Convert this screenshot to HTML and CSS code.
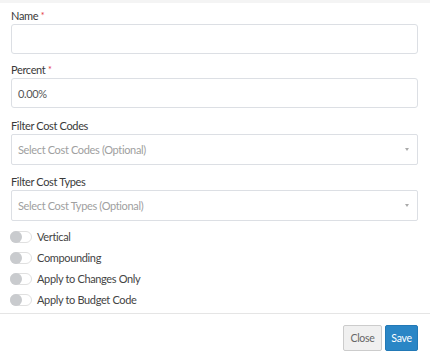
FILE: index.html
```html
<!DOCTYPE html>
<html>
<head>
<meta charset="utf-8">
<link rel="stylesheet" href="styles.css">
</head>
<body>
<div class="topbar"></div>
<div class="modal-body">
  <div class="field field-name">
    <label class="label">Name <span class="req">*</span></label>
    <div class="input"></div>
  </div>
  <div class="field field-percent">
    <label class="label">Percent <span class="req">*</span></label>
    <div class="input"><span class="value">0.00%</span></div>
  </div>
  <div class="field field-codes">
    <label class="label">Filter Cost Codes</label>
    <div class="input select"><span class="placeholder">Select Cost Codes (Optional)</span><span class="caret"></span></div>
  </div>
  <div class="field field-types">
    <label class="label">Filter Cost Types</label>
    <div class="input select"><span class="placeholder">Select Cost Types (Optional)</span><span class="caret"></span></div>
  </div>
  <div class="toggles">
    <div class="toggle-row"><span class="switch"><span class="knob"></span></span><span class="toggle-label">Vertical</span></div>
    <div class="toggle-row"><span class="switch"><span class="knob"></span></span><span class="toggle-label">Compounding</span></div>
    <div class="toggle-row"><span class="switch"><span class="knob"></span></span><span class="toggle-label">Apply to Changes Only</span></div>
    <div class="toggle-row"><span class="switch"><span class="knob"></span></span><span class="toggle-label">Apply to Budget Code</span></div>
  </div>
</div>
<div class="footer">
  <button class="btn btn-close">Close</button>
  <button class="btn btn-save">Save</button>
</div>
</body>
</html>
```
FILE: styles.css
```css
html, body {
  margin: 0;
  padding: 0;
  background: #fff;
}
body {
  font-family: Lato, "Open Sans", Arial, sans-serif;
  font-size: 11px;
  letter-spacing: -0.35px;
  color: #444;
  width: 430px;
}
.topbar {
  height: 3px;
  background: #f4f4f4;
}
.modal-body {
  padding: 6px 12px 0 11px;
  display: flex;
  flex-direction: column;
}
.field {
  display: flex;
  flex-direction: column;
  gap: 1px;
}
.field-name {
  margin-bottom: 9px;
}
.field-percent {
  margin-bottom: 11px;
}
.field-codes {
  margin-bottom: 9px;
}
.field-types {
  margin-top: 1px;
  margin-bottom: 9px;
}
.label {
  line-height: 14px;
  height: 14px;
  color: #3a3a3a;
}
.req {
  color: #e2333c;
  font-size: 9px;
  position: relative;
  top: -1px;
}
.input {
  height: 28px;
  border: 1px solid #dcdfe4;
  border-radius: 3px;
  display: flex;
  align-items: center;
  padding: 0 6px;
}
.value {
  color: #555;
}
.select {
  border-radius: 2px;
  height: 29px;
}
.placeholder {
  color: #a0a0a0;
  flex: 1;
}
.caret {
  width: 0;
  height: 0;
  border-left: 2.5px solid transparent;
  border-right: 2.5px solid transparent;
  border-top: 3px solid #aaa;
  margin-right: 2px;
}
.toggles {
  display: flex;
  flex-direction: column;
  gap: 7px;
}
.toggle-row {
  display: flex;
  align-items: center;
  height: 14px;
  gap: 4px;
}
.switch {
  width: 22px;
  height: 12px;
  border: 1px solid #e0e0e0;
  border-radius: 7px;
  background: #fff;
  position: relative;
  box-sizing: border-box;
  margin-left: -1px;
  flex: none;
}
.knob {
  position: absolute;
  left: -1px;
  top: -1px;
  width: 12px;
  height: 12px;
  border-radius: 50%;
  background: #c9cbce;
}
.toggle-label {
  color: #444;
  line-height: 14px;
  margin-left: 1px;
}
.footer {
  margin-top: 6px;
  border-top: 1px solid #e5e5e5;
  display: flex;
  justify-content: flex-end;
  gap: 3px;
  padding: 11px 12px 0 0;
}
.btn {
  font-family: Lato, "Open Sans", Arial, sans-serif;
  font-size: 10.5px;
  letter-spacing: -0.3px;
  height: 26px;
  border-radius: 2px;
  padding: 0 3px;
  cursor: pointer;
}
.btn-close {
  background: #f0f0f0;
  border: 1px solid #ccc;
  color: #666;
  width: 39px;
}
.btn-save {
  background: #2a86c6;
  border: 1px solid #2279b6;
  color: #fff;
  width: 33px;
}
```
